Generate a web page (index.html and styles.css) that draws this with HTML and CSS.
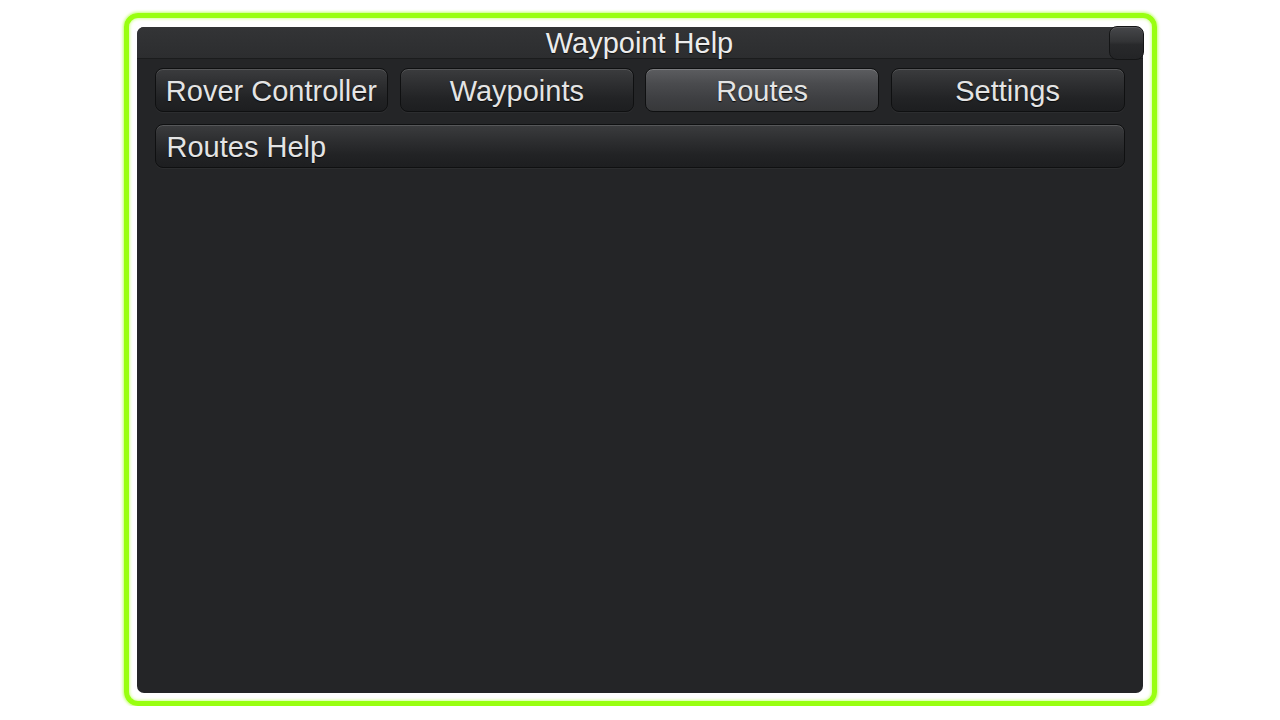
FILE: index.html
```html
<!DOCTYPE html>
<html>
<head>
<meta charset="utf-8">
<title>Waypoint Help</title>
<link rel="stylesheet" href="styles.css">
</head>
<body>
<div class="frame">
  <div class="panel">
    <div class="titlebar">
      <span class="title">Waypoint Help</span>
      <div class="close"></div>
    </div>
    <div class="tabs">
      <div class="tab">Rover Controller</div>
      <div class="tab">Waypoints</div>
      <div class="tab active">Routes</div>
      <div class="tab">Settings</div>
    </div>
    <div class="helpbar">Routes Help</div>
  </div>
</div>
</body>
</html>
```
FILE: styles.css
```css
html, body {
  margin: 0;
  padding: 0;
  background: #ffffff;
}
body {
  font-family: "Liberation Sans", Arial, sans-serif;
}
.frame {
  box-sizing: border-box;
  width: 1033px;
  height: 693px;
  margin: 13px auto 0;
  border: 5px solid #99ff10;
  border-radius: 14px;
  padding: 9px 9px 8px 8px;
  box-shadow: 0 0 3px 1px #c4ff70, inset 0 0 3px 1px #d6ff9a;
}
.panel {
  height: 100%;
  background: #242527;
  border-radius: 7px;
  display: flex;
  flex-direction: column;
}
.titlebar {
  position: relative;
  height: 31px;
  line-height: 33px;
  text-align: center;
  background: linear-gradient(to bottom, #333436 0%, #2c2d2f 100%);
  border-bottom: 1px solid #1b1c1d;
  border-radius: 7px 7px 0 0;
  color: #ececec;
  font-size: 29px;
}
.title {
  text-shadow: 0 1px 1px #111;
}
.close {
  position: absolute;
  top: -1px;
  right: -1px;
  width: 35px;
  height: 34px;
  box-sizing: border-box;
  border: 1px solid #141516;
  border-radius: 8px;
  background: linear-gradient(to bottom, #46474a 0%, #333436 45%, #28292b 55%, #232426 100%);
  box-shadow: inset 0 1px 0 rgba(255,255,255,0.12);
}
.tabs {
  display: grid;
  grid-template-columns: repeat(4, 1fr);
  column-gap: 11.5px;
  padding: 9px 18px 0 18px;
}
.tab, .helpbar {
  box-sizing: border-box;
  height: 44px;
  line-height: 44px;
  border: 1px solid #0f1011;
  border-radius: 8px;
  background: linear-gradient(to bottom, #3b3c3e 0%, #2e2f31 35%, #222325 70%, #1d1e20 100%);
  box-shadow: inset 0 1px 0 rgba(255,255,255,0.14), 0 1px 0 rgba(255,255,255,0.04);
  color: #e4e4e4;
  font-size: 29px;
  text-shadow: 0 1px 1px #0a0a0a;
  white-space: nowrap;
}
.tab {
  text-align: center;
}
.tab.active {
  background: linear-gradient(to bottom, #5c5d60 0%, #4a4b4e 35%, #3e3f42 70%, #37383a 100%);
  box-shadow: inset 0 1px 0 rgba(255,255,255,0.2);
}
.helpbar {
  margin: 12px 18px 0 18px;
  padding-left: 11px;
}
```
